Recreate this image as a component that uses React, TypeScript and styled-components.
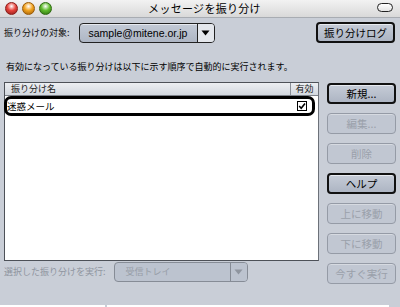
import React from "react";
import styled, { createGlobalStyle } from "styled-components";

const Global = createGlobalStyle`
  html, body { margin: 0; padding: 0; background: #c9ced7; }
  body { font-family: "Noto Sans CJK JP", "Liberation Sans", sans-serif; }
`;

const JP = `"Noto Sans CJK JP", "Liberation Sans", sans-serif`;

const Window = styled.div`
  width: 400px;
  height: 307px;
  background: #c9ced7;
  display: flex;
  flex-direction: column;
  overflow: hidden;
  font-family: ${JP};
  color: #000;
`;

const TitleBar = styled.div`
  height: 18px;
  flex: none;
  display: flex;
  align-items: center;
  padding: 0 7px 0 5px;
  box-sizing: border-box;
  background: linear-gradient(#f2f2f2, #d9d9d9);
  border-bottom: 1px solid #a8acb2;
`;

const Lights = styled.div`
  display: flex;
  gap: 4px;
  width: 140px;
`;

const Light = styled.div<{ $c: string; $d: string }>`
  width: 13px;
  height: 13px;
  border-radius: 50%;
  box-sizing: border-box;
  border: 1px solid ${(p) => p.$d};
  background: radial-gradient(circle at 50% 30%, #fff 0, ${(p) => p.$c} 45%, ${(p) => p.$d} 100%);
`;

const Title = styled.div`
  flex: 1;
  text-align: center;
  font-size: 11px;
  line-height: 14px;
  letter-spacing: 0.3px;
  margin-top: -2px;
`;

const Pill = styled.div`
  width: 16px;
  height: 9px;
  box-sizing: border-box;
  border: 1.5px solid #222;
  border-radius: 5px;
  background: linear-gradient(#fff, #e4e4e4);
  margin-left: 113px;
  margin-top: -3px;
`;

const TopRow = styled.div`
  display: flex;
  align-items: center;
  height: 21px;
  margin-top: 4px;
  padding: 0 5px 0 4px;
`;

const Label = styled.span<{ $disabled?: boolean }>`
  font-size: 9px;
  line-height: 12px;
  color: ${(p) => (p.$disabled ? "#8f959f" : "#111")};
  white-space: nowrap;
`;

const Popup = styled.div<{ $w: number; $disabled?: boolean; $ml: number }>`
  width: ${(p) => p.$w}px;
  height: 20px;
  margin-left: ${(p) => p.$ml}px;
  box-sizing: border-box;
  display: flex;
  border: 1px solid ${(p) => (p.$disabled ? "#868c96" : "#222")};
  border-radius: 4px;
  background: ${(p) => (p.$disabled ? "#bcc3cf" : "linear-gradient(#c3cad6, #aeb6c4)")};
  box-shadow: ${(p) => (p.$disabled ? "none" : "inset 0 1px 0 #e6e9ef")};
`;

const PopupText = styled.div<{ $disabled?: boolean; $latin?: boolean }>`
  flex: 1;
  padding-left: ${(p) => (p.$latin ? 9 : 11)}px;
  font-family: ${(p) => (p.$latin ? `"Liberation Sans", sans-serif` : JP)};
  font-size: ${(p) => (p.$latin ? 10.5 : 9)}px;
  line-height: 18px;
  color: ${(p) => (p.$disabled ? "#979da7" : "#000")};
`;

const PopupArrow = styled.div<{ $disabled?: boolean }>`
  width: 16px;
  flex: none;
  display: flex;
  align-items: center;
  justify-content: center;
  border-left: 1px solid ${(p) => (p.$disabled ? "#868c96" : "#222")};
  background: ${(p) => (p.$disabled ? "#bcc3cf" : "#e4e7ec")};
  border-radius: 0 3px 3px 0;
`;

const Spacer = styled.div`
  flex: 1;
`;

const Button = styled.div<{ $w?: number; $disabled?: boolean; $strong?: boolean }>`
  width: ${(p) => p.$w ?? 69}px;
  height: 21px;
  flex: none;
  box-sizing: border-box;
  display: flex;
  align-items: center;
  justify-content: center;
  font-size: 10.5px;
  line-height: 12px;
  border-radius: 4px;
  border: ${(p) => (p.$disabled ? "1px solid #959ba6" : p.$strong ? "2px solid #111" : "1.5px solid #1a1a1a")};
  background: ${(p) => (p.$disabled ? "#c1c7d2" : "linear-gradient(#c6ccd7, #adb5c3)")};
  color: ${(p) => (p.$disabled ? "#9aa0aa" : "#000")};
  box-shadow: ${(p) => (p.$disabled ? "inset 0 1px 0 #d6dae1" : "inset 0 1px 0 #e8ebf0")};
`;

const Description = styled.div`
  margin-top: 18px;
  padding-left: 6px;
  font-size: 9px;
  line-height: 12px;
  white-space: nowrap;
`;

const Main = styled.div`
  display: flex;
  align-items: flex-start;
  margin-top: 9px;
  padding-left: 4px;
`;

const LeftCol = styled.div`
  width: 315px;
  display: flex;
  flex-direction: column;
`;

const Table = styled.div`
  height: 179px;
  box-sizing: border-box;
  background: #fff;
  border: 1px solid #4d5158;
  border-right-color: #6c7179;
  display: flex;
  flex-direction: column;
`;

const Header = styled.div`
  height: 12px;
  flex: none;
  display: flex;
  background: linear-gradient(#eceef2, #d3d8df);
  border-bottom: 1px solid #7d828a;
`;

const HeadCell = styled.div<{ $w?: number }>`
  ${(p) => (p.$w ? `width: ${p.$w}px; flex: none; border-left: 1px solid #8a8f97; text-align: center;` : "flex: 1; padding-left: 6px;")}
  font-size: 9px;
  line-height: 11px;
  color: #222;
`;

const Row = styled.div`
  height: 20px;
  width: 311px;
  box-sizing: border-box;
  display: flex;
  align-items: center;
  border: 3px solid #000;
  border-radius: 7px;
  margin-left: -1px;
  padding: 0 5px 0 0;
`;

const RowText = styled.div`
  flex: 1;
  font-size: 9.5px;
  line-height: 12px;
  padding-left: 0px;
`;

const BottomRow = styled.div`
  display: flex;
  align-items: center;
  height: 20px;
  margin-top: 1px;
  padding-left: 0;
`;

const RightCol = styled.div`
  display: flex;
  flex-direction: column;
  gap: 9px;
  margin-left: 8px;
  margin-top: 1px;
`;

const Footer = styled.div`
  margin-top: auto;
  height: 2px;
  display: flex;
  gap: 2px;
`;

const FooterBar = styled.div<{ $w: number }>`
  width: ${(p) => p.$w}px;
  background: #fff;
`;

const Arrow = ({ color }: { color: string }) => (
  <svg width="9" height="6" viewBox="0 0 9 6">
    <path d="M0.5 0.5 L8.5 0.5 L4.5 5.5 Z" fill={color} />
  </svg>
);

const Check = () => (
  <svg width="10" height="10" viewBox="0 0 10 10">
    <rect x="0.5" y="0.5" width="9" height="9" fill="#fff" stroke="#000" />
    <path d="M2.2 5 L4.2 7.2 L8 2.4" fill="none" stroke="#000" strokeWidth="1.6" />
  </svg>
);

export default function App() {
  return (
    <>
      <Global />
      <Window>
        <TitleBar>
          <Lights>
            <Light $c="#e8443c" $d="#8a1c18" />
            <Light $c="#f2a31e" $d="#9a5a06" />
            <Light $c="#5fbc2c" $d="#2d6a10" />
          </Lights>
          <Title>メッセージを振り分け</Title>
          <Pill />
        </TitleBar>
        <TopRow>
          <Label>振り分けの対象:</Label>
          <Popup $w={136} $ml={9}>
            <PopupText $latin>sample@mitene.or.jp</PopupText>
            <PopupArrow>
              <Arrow color="#000" />
            </PopupArrow>
          </Popup>
          <Spacer />
          <Button $w={79} $strong>振り分けログ</Button>
        </TopRow>
        <Description>有効になっている振り分けは以下に示す順序で自動的に実行されます。</Description>
        <Main>
          <LeftCol>
            <Table>
              <Header>
                <HeadCell>振り分け名</HeadCell>
                <HeadCell $w={27}>有効</HeadCell>
              </Header>
              <Row>
                <RowText>迷惑メール</RowText>
                <Check />
              </Row>
            </Table>
            <BottomRow>
              <Label $disabled>選択した振り分けを実行:</Label>
              <Popup $w={134} $ml={8} $disabled>
                <PopupText $disabled>受信トレイ</PopupText>
                <PopupArrow $disabled>
                  <Arrow color="#8f959f" />
                </PopupArrow>
              </Popup>
            </BottomRow>
          </LeftCol>
          <RightCol>
            <Button $strong>新規...</Button>
            <Button $disabled>編集...</Button>
            <Button $disabled>削除</Button>
            <Button $strong>ヘルプ</Button>
            <Button $disabled>上に移動</Button>
            <Button $disabled>下に移動</Button>
            <Button $disabled>今すぐ実行</Button>
          </RightCol>
        </Main>
        <Footer>
          <FooterBar $w={105} />
          <FooterBar $w={282} />
        </Footer>
      </Window>
    </>
  );
}
